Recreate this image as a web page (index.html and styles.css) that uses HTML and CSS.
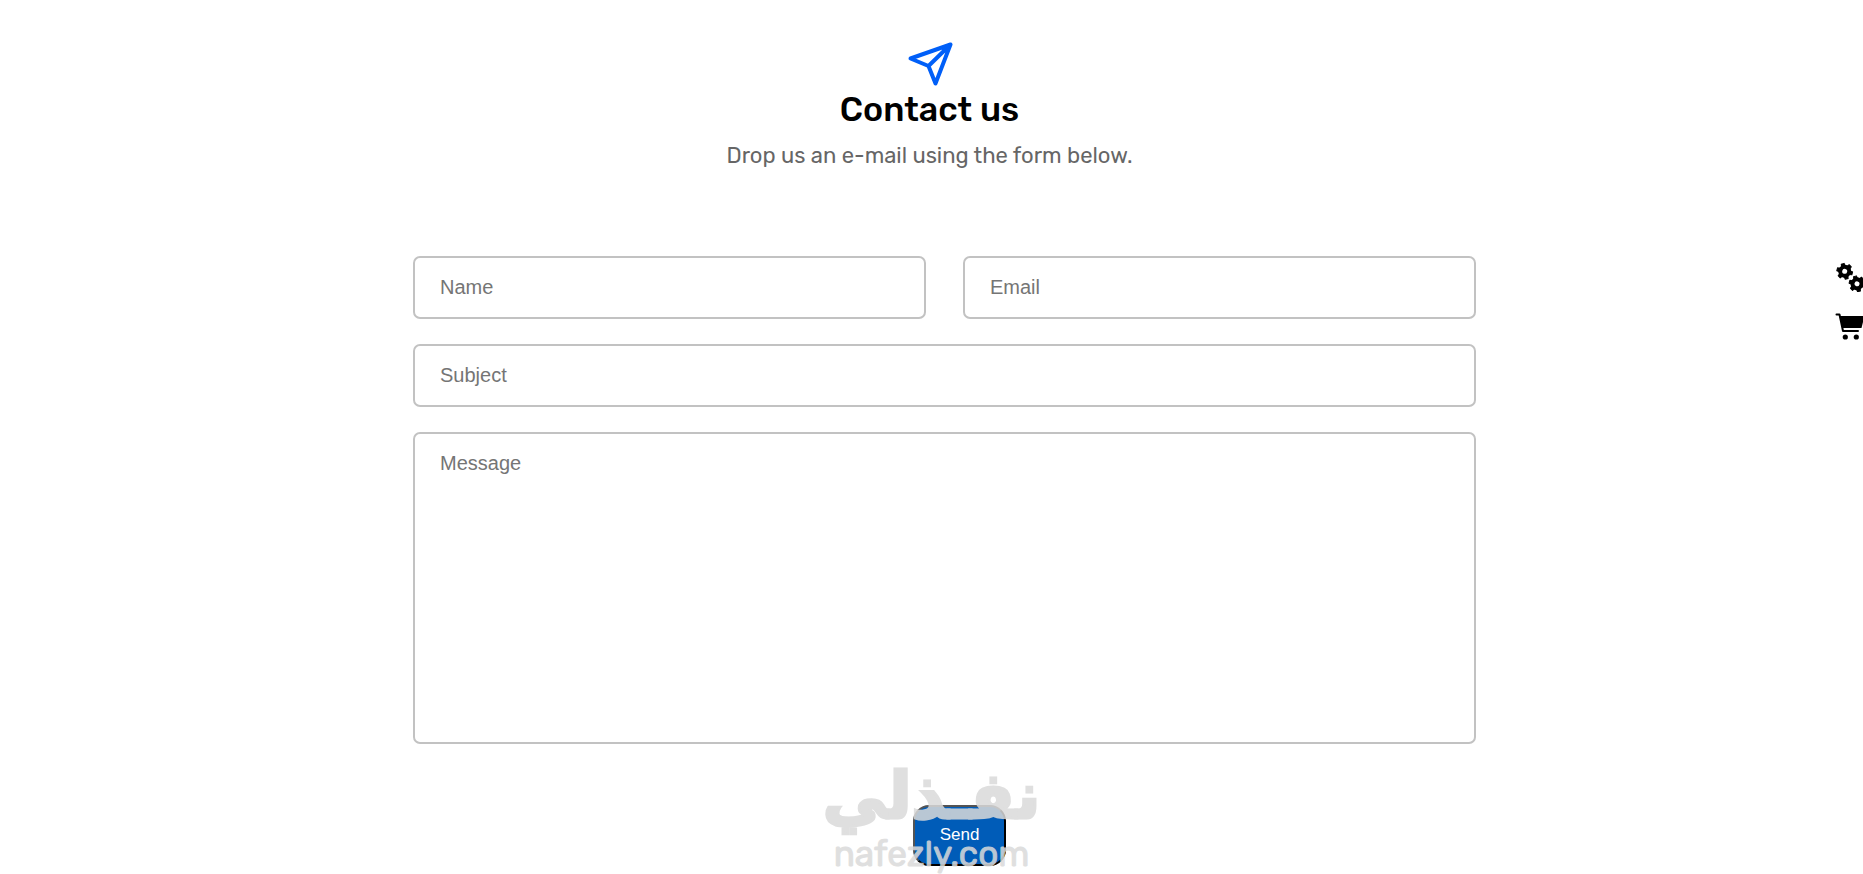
FILE: index.html
```
<!DOCTYPE html>
<html lang="en">
<head>
  <meta charset="UTF-8">
  <meta name="viewport" content="width=device-width, initial-scale=1.0">
  <title>Contact us</title>
  <link rel="stylesheet" href="styles.css">
</head>
<body>
  <section class="contact">
    <header class="contact-header">
      <svg class="plane" viewBox="0 0 48 48" aria-hidden="true">
        <path d="M4.500 18.500 44.500 4.500 29.500 43.500 22.500 26zM22.500 26 44.500 4.500"/>
      </svg>
      <h1>Contact us</h1>
      <p>Drop us an e-mail using the form below.</p>
    </header>

    <form class="contact-form">
      <div class="row">
        <input type="text" name="name" placeholder="Name" aria-label="Name">
        <input type="email" name="email" placeholder="Email" aria-label="Email">
      </div>
      <input type="text" name="subject" placeholder="Subject" aria-label="Subject">
      <textarea name="message" placeholder="Message" aria-label="Message"></textarea>
      <div class="actions">
        <button type="submit" class="send-btn">Send</button>
      </div>
    </form>
  </section>

  <nav class="side-menu">
    <a href="#settings" aria-label="Settings">
      <svg viewBox="0 0 32 32">
        <defs>
          <g id="gear">
            <circle r="4.500" fill="none" stroke="#000" stroke-width="4"/>
            <path d="M5.500-1.800 7.800-1.500V1.500L5.500 1.800z" id="tooth" stroke="#000" stroke-linejoin="round"/>
            <use href="#tooth" transform="rotate(60)"/>
            <use href="#tooth" transform="rotate(120)"/>
            <use href="#tooth" transform="rotate(180)"/>
            <use href="#tooth" transform="rotate(240)"/>
            <use href="#tooth" transform="rotate(300)"/>
          </g>
        </defs>
        <use href="#gear" transform="translate(9.700 11.300) rotate(15)"/>
        <use href="#gear" transform="translate(22 23.800) rotate(15)"/>
      </svg>
    </a>
    <a href="#cart" aria-label="Cart">
      <svg viewBox="0 0 32 32">
        <path d="M4.500 5H29.500L26.500 17H7.500z"/>
        <path d="M1.500 3.500H4.500L8 20H23" fill="none" stroke="#000" stroke-width="2" stroke-linecap="round" stroke-linejoin="round"/>
        <circle cx="10.300" cy="26" r="2.600"/>
        <circle cx="21.300" cy="26" r="2.600"/>
      </svg>
    </a>
  </nav>

  <div class="watermark">
    <span class="watermark-ar" lang="ar" dir="rtl">نفـذلي</span>
    <span class="watermark-en">nafezly.com</span>
  </div>
</body>
</html>
```
FILE: styles.css
```
* {
  box-sizing: border-box;
}

body {
  position: relative;
  margin: 0;
  background: #fff;
  font-family: Rubik, Roboto, sans-serif;
  overflow-x: hidden;
}

.contact {
  padding: 40px 20px 8px;
}

.contact-header {
  padding-right: 4px;
  text-align: center;
}

.plane {
  display: block;
  width: 48px;
  height: 48px;
  margin: 0 auto;
  fill: none;
  stroke: #005ff8;
  stroke-width: 4;
  stroke-linecap: round;
  stroke-linejoin: round;
}

h1 {
  margin: 0;
  font-size: 34px;
  font-weight: 500;
  line-height: 44px;
}

.contact-header p {
  margin: 10px 0 0;
  color: #666;
  font-size: 22px;
  line-height: 28px;
}

.contact-form {
  display: flex;
  flex-direction: column;
  gap: 25px;
  max-width: 1063px;
  margin: 86px auto 0;
  position: relative;
  left: 13px;
}

.row {
  display: grid;
  grid-template-columns: 1fr 1fr;
  gap: 37px;
}

.contact-form input,
.contact-form textarea {
  width: 100%;
  padding: 18px 25px;
  border: 2px solid #c2c2c2;
  border-radius: 7px;
  background: #fff;
  font-family: "Liberation Sans", Arial, sans-serif;
  font-size: 20px;
  line-height: 23px;
}

.contact-form textarea {
  display: block;
  height: 312px;
  resize: none;
}

::placeholder {
  color: #757575;
}

.actions {
  padding: 36px 0 0 30px;
  text-align: center;
}

.send-btn {
  width: 93px;
  height: 61px;
  padding: 0 6px 2px;
  border: 2px outset #000;
  border-radius: 16px;
  background: #005cb8;
  color: #fff;
  font-family: "Liberation Sans", Arial, sans-serif;
  font-size: 17px;
  cursor: pointer;
}

.side-menu {
  position: absolute;
  top: 260px;
  right: -4px;
  display: flex;
  flex-direction: column;
  gap: 19px;
}

.side-menu svg {
  display: block;
  width: 32px;
  height: 32px;
}

.watermark {
  position: absolute;
  left: 0;
  right: 0;
  bottom: 0;
  display: flex;
  flex-direction: column;
  align-items: center;
  color: #dadada;
  opacity: 0.85;
  pointer-events: none;
}

.watermark-ar {
  font-family: "DejaVu Sans", sans-serif;
  font-size: 64px;
  font-weight: 700;
  line-height: 76px;
  -webkit-text-stroke: 3px #dadada;
}

.watermark-en {
  font-size: 35px;
  font-weight: 400;
  line-height: 40px;
  -webkit-text-stroke: 1px #dadada;
}
```
